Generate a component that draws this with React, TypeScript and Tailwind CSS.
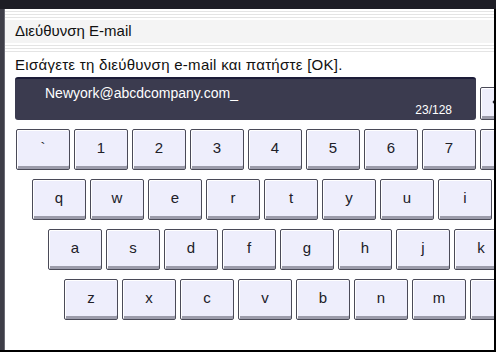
import React from "react";

const font = { fontFamily: '"Liberation Sans", "DejaVu Sans", sans-serif' };

function Key({ label }: { label: string }) {
  return (
    <div className="shrink-0 w-[54px] h-[41px] rounded-[2px] border border-[#4a4a58] bg-[#eeeefc] shadow-[inset_1px_1px_0_#ffffff,inset_0_-3px_0_#9c9cab] flex items-center justify-center pb-[3px] text-[15px] text-[#202028]">
      {label}
    </div>
  );
}

function Row({ keys, pl }: { keys: string[]; pl: string }) {
  return (
    <div className={`flex gap-[4px] overflow-hidden ${pl}`}>
      {keys.map((k, i) => (
        <Key key={i} label={k} />
      ))}
    </div>
  );
}

export default function App() {
  return (
    <div className="w-[496px] h-[352px] overflow-hidden bg-white flex flex-col" style={font}>
      <div className="h-[9px] shrink-0 bg-[#1d1d25]" />
      <div className="flex flex-1 min-h-0">
        <div className="w-[5px] shrink-0 bg-[#3e3e48] border-r border-[#6a6a74]" />
        <div className="flex-1 min-w-0 flex flex-col overflow-hidden">
          {/* Title bar */}
          <div className="h-[41px] shrink-0 flex flex-col bg-[#f4f4f4] border-b-2 border-[#a8a8a8]">
            <div className="h-[11px] shrink-0 bg-[repeating-linear-gradient(to_bottom,#ffffff_0px,#ffffff_2px,#e4e4e4_2px,#e4e4e4_3px)]" />
            <div className="flex-1 flex items-center pl-[10px] text-[15px] text-[#111]">Διεύθυνση E-mail</div>
            <div className="h-[10px] shrink-0 bg-[repeating-linear-gradient(to_bottom,#ffffff_0px,#ffffff_2px,#e4e4e4_2px,#e4e4e4_3px)]" />
          </div>
          {/* Instruction */}
          <div className="pl-[10px] pt-[6px] h-[27px] shrink-0 text-[15px] tracking-[0.28px] text-[#111] leading-[18px]">
            Εισάγετε τη διεύθυνση e-mail και πατήστε [OK].
          </div>
          {/* Input row */}
          <div className="flex items-end gap-[4px] pl-[10px] h-[43px] shrink-0 overflow-hidden">
            <div className="w-[461px] h-[43px] shrink-0 rounded-[3px] bg-[#3b3b4f] border-t-2 border-[#1c1c38] flex flex-col">
              <div className="pl-[30px] pt-[5px] text-[14px] text-white leading-[18px]">Newyork@abcdcompany.com_</div>
              <div className="flex-1 flex items-end justify-end pr-[24px] pb-[3px] text-[12px] text-white leading-[14px]">23/128</div>
            </div>
            <div className="w-[54px] h-[33px] shrink-0 rounded-[2px] border border-[#4a4a58] bg-[#eeeefc] shadow-[inset_1px_1px_0_#ffffff,inset_0_-3px_0_#9c9cab] flex items-center pl-[11px] pb-[3px]">
              <svg width="20" height="10" viewBox="0 0 20 10" fill="none" stroke="#202028" strokeWidth="1.2">
                <path d="M1 5H19M1 5L5 1M1 5L5 9" />
              </svg>
            </div>
          </div>
          <div className="flex flex-col gap-[9px] pt-[9px]">
            <Row pl="pl-[11px]" keys={["`", "1", "2", "3", "4", "5", "6", "7", ""]} />
            <Row pl="pl-[27px]" keys={["q", "w", "e", "r", "t", "y", "u", "i", ""]} />
            <Row pl="pl-[43px]" keys={["a", "s", "d", "f", "g", "h", "j", "k"]} />
            <Row pl="pl-[59px]" keys={["z", "x", "c", "v", "b", "n", "m", ""]} />
          </div>
        </div>
        <div className="w-[2px] shrink-0 bg-black" />
      </div>
      <div className="h-[2px] shrink-0 bg-black" />
    </div>
  );
}
